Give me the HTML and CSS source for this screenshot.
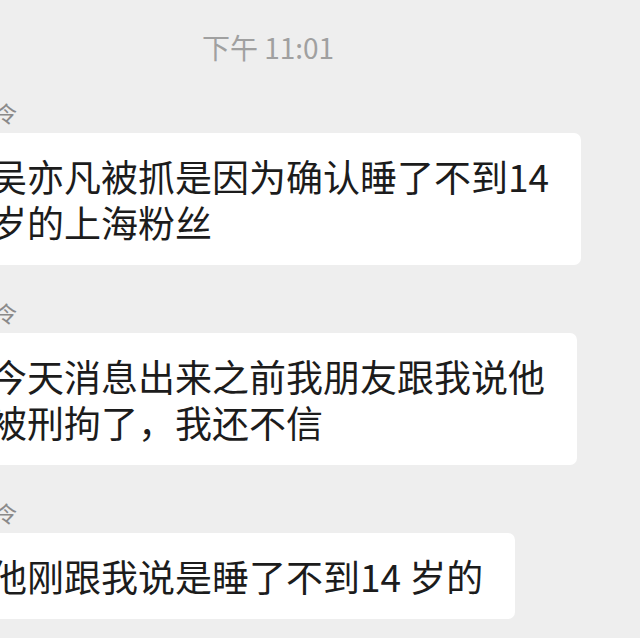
FILE: index.html
```html
<!DOCTYPE html>
<html lang="zh-CN">
<head>
    <meta charset="UTF-8">
    <meta name="viewport" content="width=device-width, initial-scale=1.0">
    <title>聊天记录</title>
    <link rel="stylesheet" href="styles.css">
</head>
<body>
    <div class="chat">
        <div class="time">下午 11:01</div>

        <div class="msg">
            <div class="name">令</div>
            <div class="bubble">吴亦凡被抓是因为确认睡了不到14<br>岁的上海粉丝</div>
        </div>

        <div class="msg">
            <div class="name">令</div>
            <div class="bubble">今天消息出来之前我朋友跟我说他<br>被刑拘了，我还不信</div>
        </div>

        <div class="msg">
            <div class="name">令</div>
            <div class="bubble">他刚跟我说是睡了不到14 岁的</div>
        </div>
    </div>
</body>
</html>
```

FILE: styles.css
```css
/* Basic reset */
* {
    margin: 0;
    padding: 0;
    box-sizing: border-box;
}

body {
    font-family: "Noto Sans CJK SC", "Noto Sans", sans-serif;
    background-color: #eeeeee;
    overflow: hidden;
    height: 638px;
}

/* Chat column, cropped at the left like the screenshot */
.chat {
    display: flex;
    flex-direction: column;
    padding-top: 30px;
    margin-left: -40px;
}

/* Centre of the original screen sits left of ours */
.time {
    align-self: center;
    margin-right: 64px;
    font-size: 28px;
    line-height: 34px;
    color: #a0a0a0;
    margin-bottom: 35px;
}

.msg {
    display: flex;
    flex-direction: column;
    align-items: flex-start;
    margin-bottom: 34px;
}

.name {
    font-size: 22px;
    line-height: 26px;
    color: #8a8a8a;
    margin-left: 35px;
    margin-bottom: 8px;
}

/* Message bubble */
.bubble {
    background-color: #fff;
    border-radius: 7px;
    padding: 20px 32px 20px 30px;
    font-size: 37px;
    line-height: 46px;
    color: #1c1c1c;
    white-space: nowrap;
}
```
